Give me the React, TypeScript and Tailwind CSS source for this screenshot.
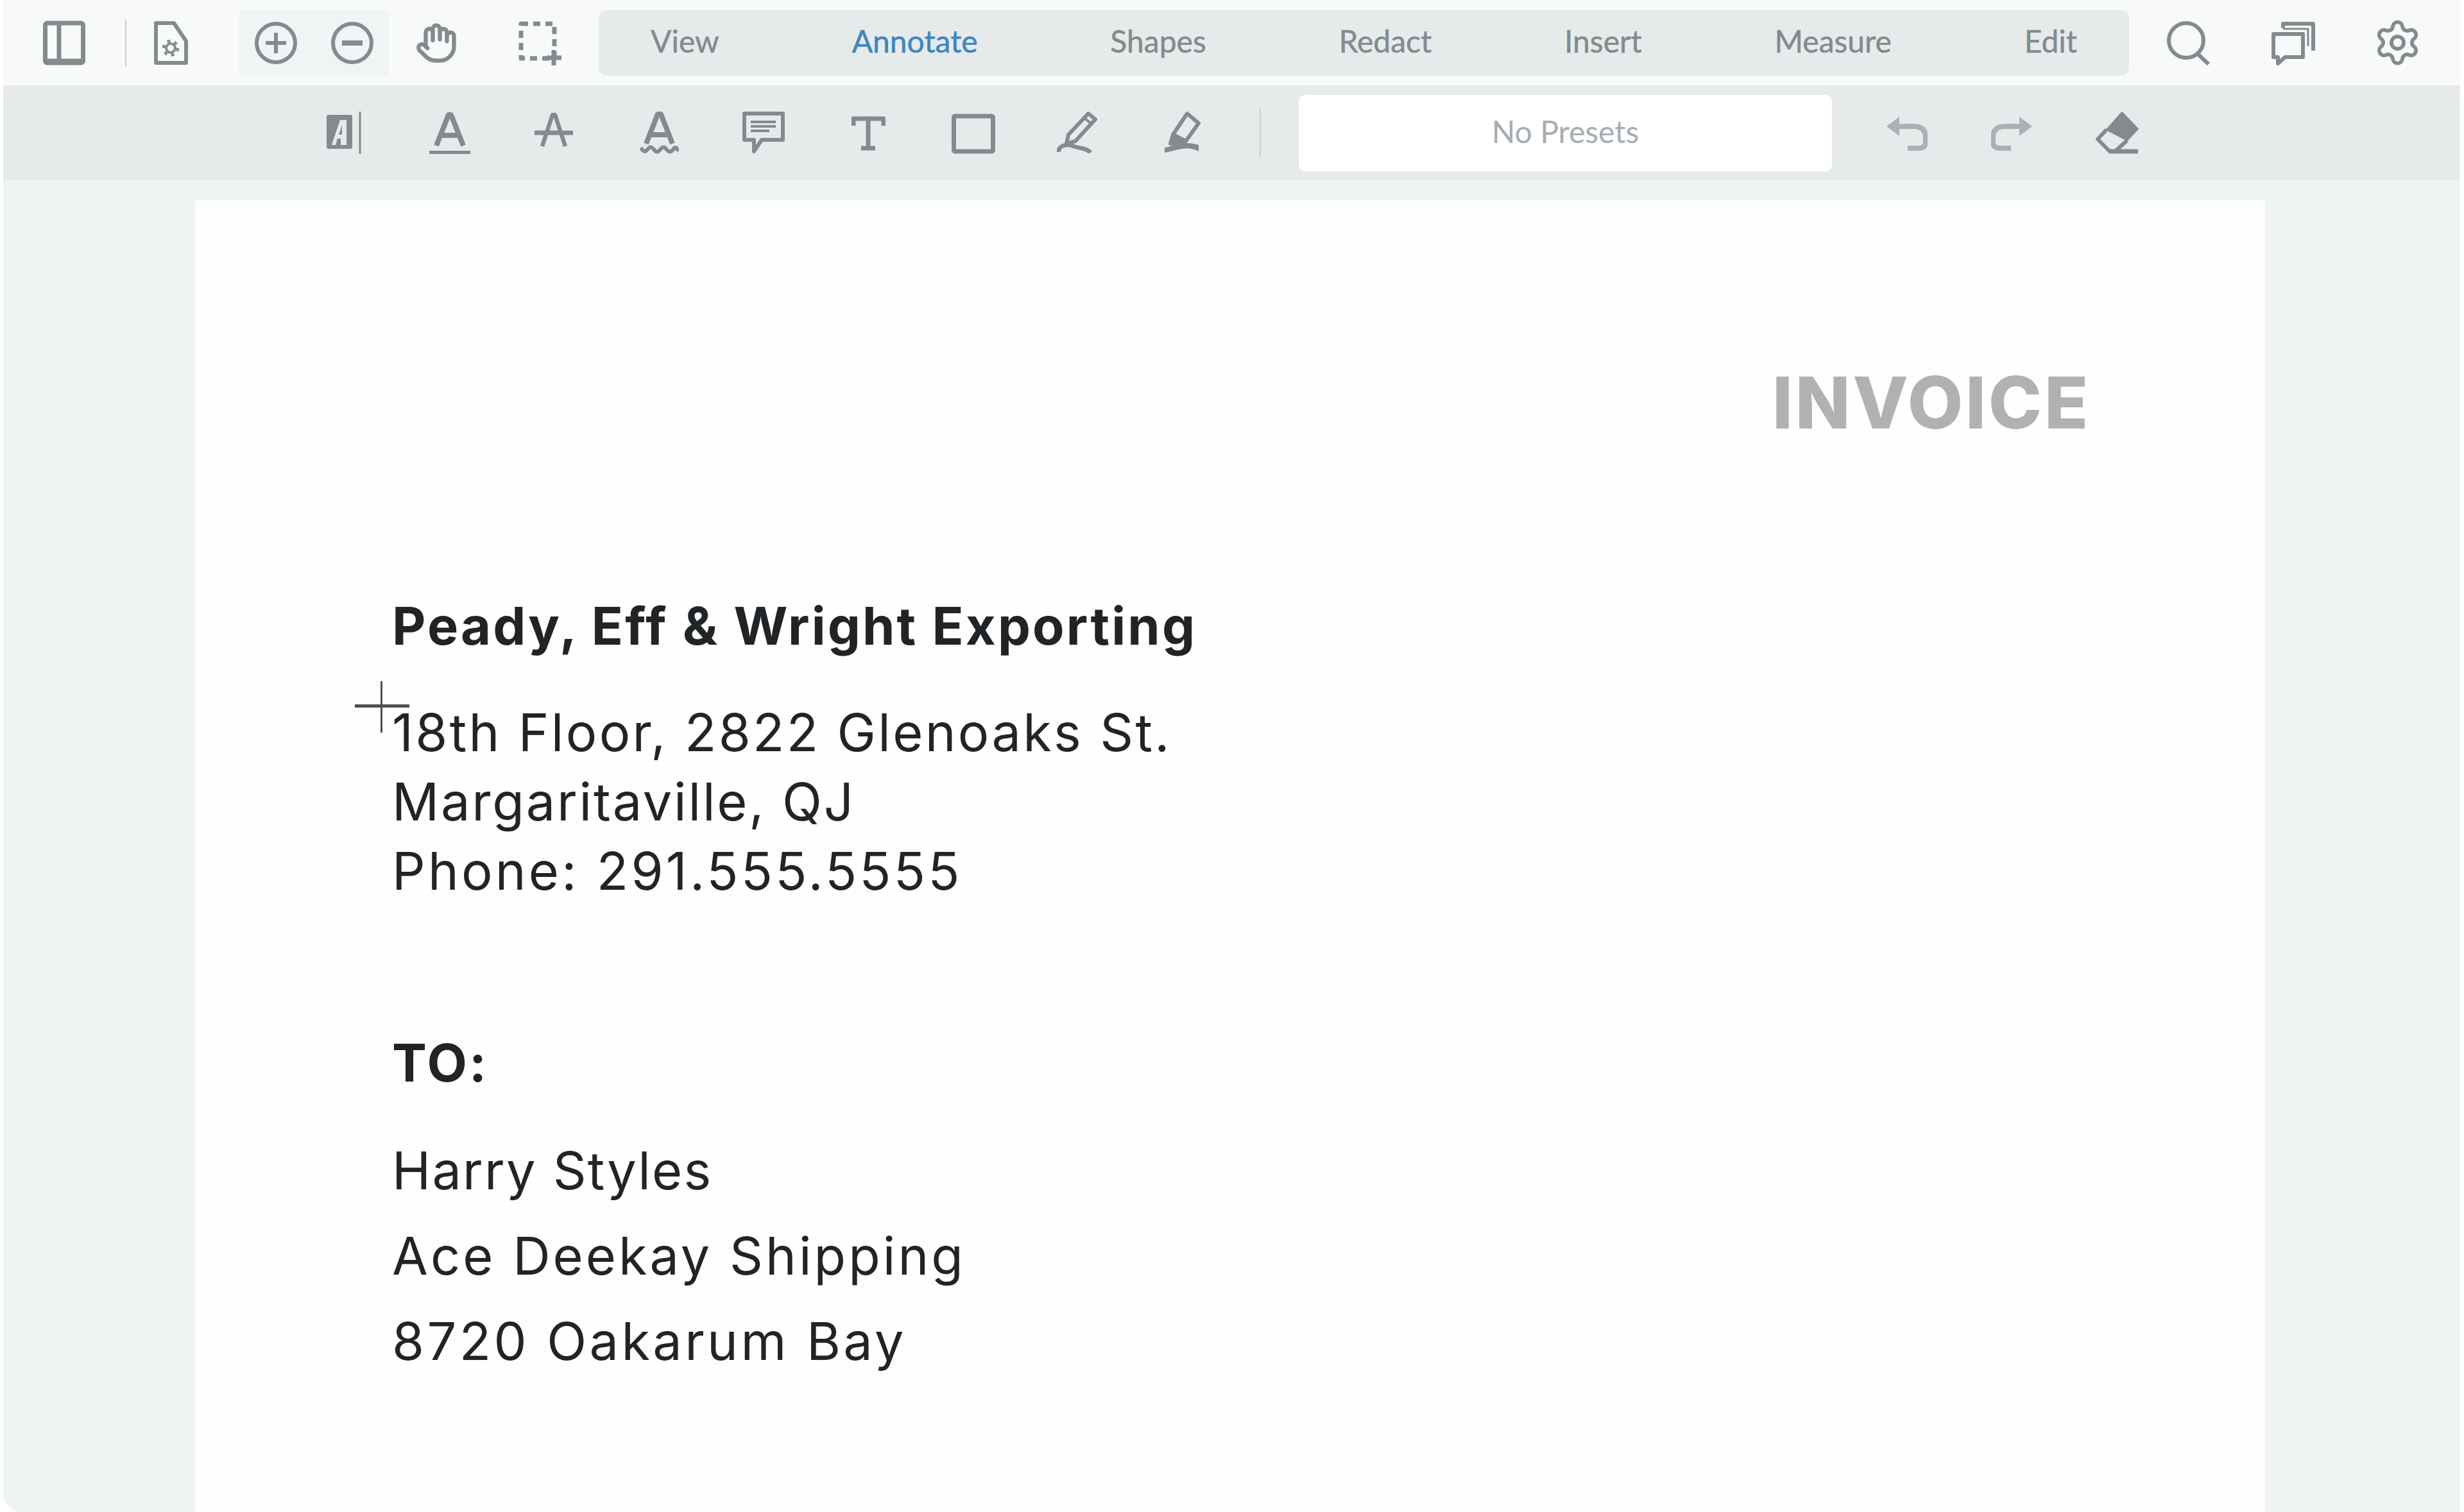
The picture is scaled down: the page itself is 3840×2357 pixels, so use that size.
import React from "react";
import { Hand, Settings } from "lucide-react";

const C = "#838b8f";
const L = "#a9b1b5";

type P = { className?: string };

const S = ({ w, h, className, children, color = C, sw = 6 }: { w: number; h: number; className?: string; children: React.ReactNode; color?: string; sw?: number }) => (
  <svg width={w} height={h} viewBox={`0 0 ${w} ${h}`} className={`shrink-0 ${className ?? ""}`} fill="none" stroke={color} strokeWidth={sw} strokeLinejoin="round">
    {children}
  </svg>
);

const PanelIcon = ({ className }: P) => (
  <S w={66} h={70} className={className} sw={7}>
    <rect x={3.5} y={4} width={59} height={62} rx={3} />
    <path d="M25 4V66" />
    <path d="M3 63H63" />
  </S>
);
const FileGear = ({ className }: P) => (
  <S w={53} h={70} className={className}>
    <path d="M3 4H31L50 32V66H3Z" />
    <circle cx={26} cy={43} r={7} strokeWidth={4} />
    <circle cx={26} cy={43} r={11} strokeWidth={4.5} strokeDasharray="5 6.5" />
  </S>
);
const PlusC = ({ className }: P) => (
  <S w={66} h={70} className={className}>
    <circle cx={33} cy={35} r={30} />
    <path d="M17 35H49M33 19V51" />
  </S>
);
const MinusC = ({ className }: P) => (
  <S w={66} h={70} className={className}>
    <circle cx={33} cy={35} r={30} />
    <path d="M17 35H49" strokeWidth={8} />
  </S>
);
const Select = ({ className }: P) => (
  <S w={67} h={70} className={className} sw={7}>
    <rect x={4} y={5} width={52} height={54} strokeDasharray="11 8" />
    <path d="M55 46V70M44 58H67" strokeDasharray="none" />
  </S>
);
const Search = ({ className }: P) => (
  <S w={68} h={70} className={className}>
    <circle cx={30} cy={31} r={27} />
    <path d="M48 52L65 68" />
  </S>
);
const Comments = ({ className }: P) => (
  <S w={68} h={70} className={className}>
    <path d="M3 21H49V57H21L10 67V57H3Z" />
    <path d="M18 12V5H65V47" />
    <path d="M18 13H57V40" strokeWidth={3} />
  </S>
);

const TextCursor = ({ className }: P) => (
  <S w={54} h={66} className={className}>
    <rect x={0} y={5} width={40} height={53} rx={3} fill={C} stroke="none" />
    <path d="M8 52L21 13H31V52H22V42H17L14 52Z M24 21L19 36H24Z" fill="#e6eaea" stroke="none" fillRule="evenodd" />
    <path d="M52 0V66" strokeWidth={3} />
  </S>
);
const AUnder = ({ className }: P) => (
  <S w={66} h={66} className={className}>
    <path d="M12 53L31 5H35L54 53M19 37H47" strokeWidth={8} />
    <path d="M1 64H65" strokeWidth={6} />
  </S>
);
const AStrike = ({ className }: P) => (
  <S w={60} h={66} className={className}>
    <path d="M12 54L28 5H32L48 54" strokeWidth={6.5} />
    <path d="M0 33H60" strokeWidth={7} />
  </S>
);
const AWave = ({ className }: P) => (
  <S w={61} h={66} className={className}>
    <path d="M10 50L28 4H33L51 50M16 36H45" strokeWidth={8} />
    <path d="M2 56Q7 66 12 59T22 59T32 59T42 59T52 59T60 62" strokeWidth={6} />
  </S>
);
const Comment = ({ className }: P) => (
  <S w={66} h={66} className={className} sw={6}>
    <path d="M3 3H63V44H30L18 62V44H3Z" />
    <path d="M13 16H52M13 23H52M13 30H42" strokeWidth={4} />
  </S>
);
const TIcon = ({ className }: P) => (
  <S w={53} h={66} className={className} sw={7}>
    <path d="M3 22V11H50V22" />
    <path d="M26 11V57M15 57H37" />
  </S>
);
const RectI = ({ className }: P) => (
  <S w={68} h={66} className={className} sw={7}>
    <rect x={3.5} y={7} width={61} height={55} rx={2} />
  </S>
);
const Pen = ({ className }: P) => (
  <S w={63} h={66} className={className} sw={6}>
    <path d="M49 3L60 12L29 46L15 50L18 36Z" />
    <path d="M43 10L54 19" strokeWidth={4} />
    <path d="M3 63C2 52 18 50 26 54C34 57 48 57 52 64" strokeWidth={6.5} />
  </S>
);
const Highlighter = ({ className }: P) => (
  <S w={60} h={66} className={className} sw={6}>
    <path d="M38 3L56 18L36 46L16 36Z" />
    <path d="M16 36L36 46L26 52L12 50Z" fill={C} />
    <path d="M3 64V56C20 54 30 44 56 52V62C38 52 24 60 3 64Z" fill={C} stroke="none" />
  </S>
);
const Undo = ({ className }: P) => (
  <S w={64} h={66} className={className} color={L}>
    <path d="M0 23L20 8V38Z" fill={L} stroke="none" />
    <path d="M18 23H44Q61 24 61 40V48Q61 57 50 57H33" strokeWidth={8} />
  </S>
);
const Redo = ({ className }: P) => (
  <S w={64} h={66} className={className} color={L}>
    <path d="M64 23L44 8V38Z" fill={L} stroke="none" />
    <path d="M46 23H20Q3 24 3 40V48Q3 57 14 57H31" strokeWidth={8} />
  </S>
);
const Eraser = ({ className }: P) => (
  <S w={67} h={66} className={className}>
    <path d="M41 1L66 27L49 45L17 28Z" fill={C} stroke={C} strokeWidth={2} />
    <path d="M17 28L3 43L22 62H30L49 45" />
    <path d="M22 62H66" strokeWidth={7} />
  </S>
);

const tabs = ["View", "Annotate", "Shapes", "Redact", "Insert", "Measure", "Edit"];

export default function App() {
  return (
    <div className="w-[3840px] h-[2357px] bg-white overflow-hidden">
      <div className="ml-[5px] w-[3829px] h-full flex flex-col rounded-bl-[30px] overflow-hidden bg-[#eef3f3]">
        {/* Top bar */}
        <div className="h-[133px] shrink-0 flex items-center bg-[#f8fafa] pl-[62px]">
          <PanelIcon />
          <div className="ml-[62px] w-[2px] h-[74px] bg-[#c6cbcd] shrink-0" />
          <FileGear className="ml-[43px]" />
          <div className="ml-[79px] w-[234px] h-[102px] rounded-[6px] bg-[#f0f4f5] flex items-center pl-[25px] shrink-0">
            <PlusC />
            <MinusC className="ml-[53px]" />
          </div>
          <Hand size={66} strokeWidth={2.3} color={C} className="ml-[41px] shrink-0" />
          <Select className="ml-[95px]" />
          <div
            className="ml-[58px] w-[2385px] h-[102px] rounded-[12px] bg-[#e6eaea] flex items-center justify-between pl-[81px] pr-[81px] pb-[6px] shrink-0 text-[48px] text-[#838b8f] font-['Lato',sans-serif]"
          >
            {tabs.map((t) => (
              <span key={t} className={t === "Annotate" ? "text-[#3d86c0] [-webkit-text-stroke:0.5px_#3d86c0]" : "[-webkit-text-stroke:0.5px_#838b8f]"}>
                {t}
              </span>
            ))}
          </div>
          <Search className="ml-[59px]" />
          <Comments className="ml-[95px]" />
          <Settings size={77} strokeWidth={1.8} color={C} className="ml-[90px] shrink-0" />
        </div>
        {/* Annotate bar */}
        <div className="h-[148px] shrink-0 flex items-center bg-[#e6eaea] pl-[504px]">
          <TextCursor />
          <AUnder className="ml-[105px]" />
          <AStrike className="ml-[99px]" />
          <AWave className="ml-[104px]" />
          <Comment className="ml-[99px]" />
          <TIcon className="ml-[104px]" />
          <RectI className="ml-[103px]" />
          <Pen className="ml-[96px]" />
          <Highlighter className="ml-[102px]" />
          <div className="ml-[91px] w-[2px] h-[74px] bg-[#c6cbcd] shrink-0" />
          <div className="ml-[59px] w-[831px] h-[119px] rounded-[10px] bg-white flex items-center justify-center pb-[5px] shrink-0 text-[48px] text-[#a5adb1] font-['Lato',sans-serif]">
            No Presets
          </div>
          <Undo className="ml-[85px]" />
          <Redo className="ml-[99px]" />
          <Eraser className="ml-[99px]" />
        </div>
        {/* Document */}
        <div className="flex-1 px-[299px] pt-[31px] min-h-0 overflow-hidden">
          <div className="relative w-[3226px] h-full bg-[#fefefe] text-[#212426] font-['Inter',sans-serif] pl-[307px]">
            <div className="pt-[250px] pr-[272px] text-right text-[112px] leading-[130px] font-extrabold tracking-[3.8px] text-[#b1b1b1]">INVOICE</div>
            <div className="mt-[234px] text-[81px] leading-[100px] font-bold tracking-[3.1px]">Peady, Eff &amp; Wright Exporting</div>
            <div className="mt-[62px] text-[81px] leading-[108px]">
              <div className="tracking-[3.3px]">18th Floor, 2822 Glenoaks St.</div>
              <div className="tracking-[2.8px]">Margaritaville, QJ</div>
              <div className="tracking-[4.2px]">Phone: 291.555.5555</div>
            </div>
            <div className="mt-[195px] text-[81px] leading-[100px] font-bold tracking-[3px]">TO:</div>
            <div className="mt-[52px] text-[81px] leading-[133px]">
              <div className="tracking-[2.2px]">Harry Styles</div>
              <div className="tracking-[4px]">Ace Deekay Shipping</div>
              <div className="tracking-[4.4px]">8720 Oakarum Bay</div>
            </div>
            <div className="absolute left-[249px] top-[786px] w-[85px] h-[5px] bg-[#4b4f52]" />
            <div className="absolute left-[289px] top-[750px] w-[3px] h-[80px] bg-[#4b4f52]" />
          </div>
        </div>
      </div>
    </div>
  );
}
